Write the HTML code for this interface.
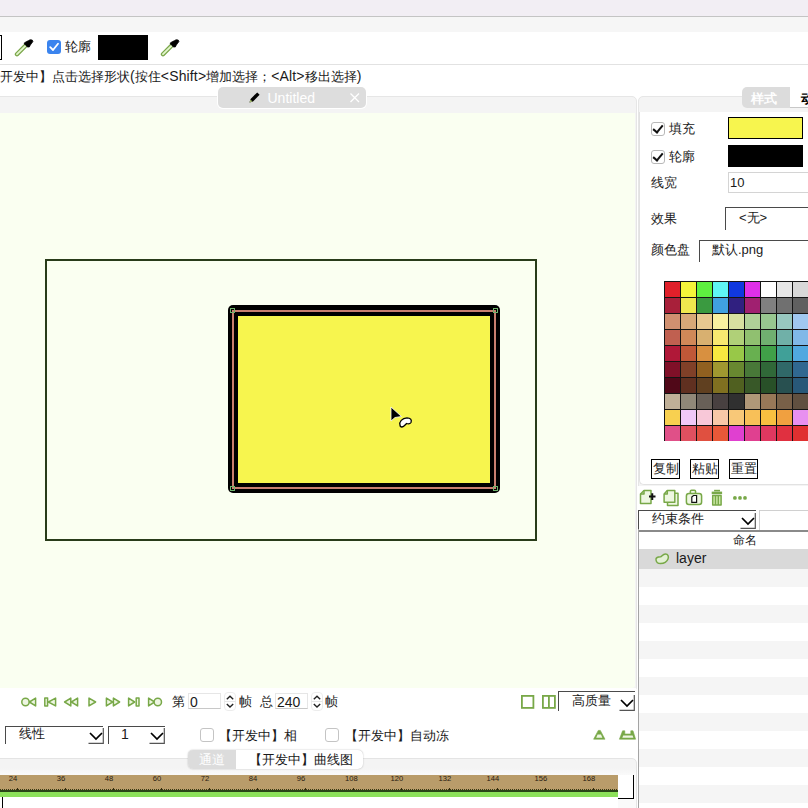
<!DOCTYPE html>
<html><head><meta charset="utf-8">
<style>
*{margin:0;padding:0;box-sizing:border-box}
html,body{width:808px;height:808px;overflow:hidden;background:#fff;font-family:"Liberation Sans",sans-serif;font-size:13px;color:#1a1a1a}
.a{position:absolute}
#topbar{left:0;top:0;width:808px;height:17px;background:#f2eef4;border-bottom:1px solid #c4c4c4}
#band1{left:0;top:17px;width:808px;height:15px;background:#f6f6f6}
#toolbar{left:0;top:32px;width:808px;height:33px;background:#fff;border-bottom:1px solid #e2e2e2}
#status{left:0;top:65px;width:808px;height:31px;background:#fff}
.panel{background:#f4f4f4;border:1px solid #e6e6e6;border-radius:5px 5px 0 0}
.txt{white-space:nowrap;line-height:1}
.chk{width:14px;height:14px;border:1px solid #b8b8b8;border-radius:3px;background:#fff}
.chk::after{content:"";position:absolute;left:3px;top:0px;width:4px;height:8px;border-right:2px solid #111;border-bottom:2px solid #111;transform:rotate(40deg)}
.sunk{background:#fff;border-top:1.6px solid #4a4a4a;border-left:1.6px solid #4a4a4a}
.pal{width:161px;height:160px;background:#141414}
.pal div{position:absolute;width:15px;height:15px}
.btn{height:20px;border:1px solid #000;background:#fff;font-size:13px;line-height:18px;text-align:center;white-space:nowrap}
.rl{font-size:7.6px;color:#2a2010;line-height:7px}
.L{font-size:14px}
.c{display:inline-block;width:1em;text-align:center;font-style:normal}
</style></head><body>
<div class="a" id="topbar"></div>
<div class="a" id="band1"></div>
<div class="a" id="toolbar">
  <div class="a" style="left:-4px;top:3px;width:6px;height:25px;border:1.5px solid #000;background:#fff"></div>
  <svg class="a" style="left:14px;top:6px" width="22" height="20" viewBox="0 0 22 20">
    <path d="M3 16.2 L11.4 7.8" stroke="#7aa64a" stroke-width="4.4" stroke-linecap="round"/>
    <path d="M3 16.2 L11.4 7.8" stroke="#e2f5cc" stroke-width="1.9" stroke-linecap="round"/>
    <path d="M10.3 4.9 L12.5 3.6 L14.7 2.6 L16 1.8 L18.2 2 L18.9 3.5 L17.8 5.1 L16.3 7 L15.3 9 L13.5 8.9 L11.9 7.5 L10.4 6 Z" fill="#000" stroke="#000" stroke-width="0.8" stroke-linejoin="round"/>
  </svg>
  <div class="a" style="left:47px;top:8px;width:14px;height:14px;border-radius:3px;background:#3b84ee"></div>
  <svg class="a" style="left:47px;top:8px" width="14" height="14" viewBox="0 0 14 14"><path d="M3.2 7.2 L6 10 L11 3.8" stroke="#fff" stroke-width="1.8" fill="none" stroke-linecap="round" stroke-linejoin="round"/></svg>
  <div class="a txt" style="left:65px;top:8px;font-size:13px"><i class="c">轮</i><i class="c">廓</i></div>
  <div class="a" style="left:98px;top:3px;width:50px;height:25px;background:#000"></div>
  <svg class="a" style="left:160px;top:6px" width="22" height="20" viewBox="0 0 22 20">
    <path d="M3 16.2 L11.4 7.8" stroke="#7aa64a" stroke-width="4.4" stroke-linecap="round"/>
    <path d="M3 16.2 L11.4 7.8" stroke="#e2f5cc" stroke-width="1.9" stroke-linecap="round"/>
    <path d="M10.3 4.9 L12.5 3.6 L14.7 2.6 L16 1.8 L18.2 2 L18.9 3.5 L17.8 5.1 L16.3 7 L15.3 9 L13.5 8.9 L11.9 7.5 L10.4 6 Z" fill="#000" stroke="#000" stroke-width="0.8" stroke-linejoin="round"/>
  </svg>
</div>
<div class="a" id="status">
  <div class="a txt" id="st" style="left:0;top:4px;font-size:13px;letter-spacing:0.15px"><i class="c">开</i><i class="c">发</i><i class="c">中</i><i class="c">】</i><i class="c">点</i><i class="c">击</i><i class="c">选</i><i class="c">择</i><i class="c">形</i><i class="c">状</i><span class="L">(</span><i class="c">按</i><i class="c">住</i><span class="L">&lt;Shift&gt;</span><i class="c">增</i><i class="c">加</i><i class="c">选</i><i class="c">择</i><i class="c">；</i><span class="L">&lt;Alt&gt;</span><i class="c">移</i><i class="c">出</i><i class="c">选</i><i class="c">择</i><span class="L">)</span></div>
</div>

<!-- left canvas panel -->
<div class="a panel" style="left:-6px;top:96px;width:643px;height:596px;border-radius:5px"></div>
<div class="a" style="left:0;top:113px;width:635px;height:575px;background:#fafff1;border-radius:0 0 3px 0"></div>
<!-- untitled tab -->
<div class="a" style="left:218px;top:87px;width:148px;height:21px;background:#dddddd;border-radius:5px;box-shadow:0 0 0 1px #fff"></div>
<svg class="a" style="left:248px;top:91px" width="13" height="13" viewBox="0 0 13 13"><path d="M1.5 11.5 L2.6 8 L9.2 1.4 L11.6 3.8 L5 10.4 Z" fill="#000"/><path d="M1.5 11.5 L2.5 8.6 L4.4 10.5 Z" fill="#a8c070"/></svg>
<div class="a txt" style="left:267.5px;top:91px;color:#fff;font-size:14px">Untitled</div>
<svg class="a" style="left:349px;top:92px" width="12" height="12" viewBox="0 0 12 12"><path d="M1.5 1.5 L10 10 M10 1.5 L1.5 10" stroke="#fff" stroke-width="1.3"/></svg>

<!-- big outline rect -->
<div class="a" style="left:45px;top:259px;width:492px;height:282px;border:2px solid #283c1a"></div>
<!-- yellow shape -->
<div class="a" style="left:228px;top:305px;width:272px;height:188px;background:#000;border-radius:5px"></div>
<div class="a" style="left:238px;top:316px;width:252px;height:167px;background:#f7f54e"></div>
<div class="a" style="left:232px;top:310px;width:264px;height:179px;border:2px solid #c97e6e"></div>
<div class="a" style="left:229.5px;top:308px;width:5px;height:5px;border:1px solid #6fb36c"></div>
<div class="a" style="left:493px;top:308px;width:5px;height:5px;border:1px solid #6fb36c"></div>
<div class="a" style="left:229.5px;top:486px;width:5px;height:5px;border:1px solid #6fb36c"></div>
<div class="a" style="left:493px;top:486px;width:5px;height:5px;border:1px solid #6fb36c"></div>
<!-- cursor -->
<svg class="a" style="left:388px;top:404px" width="28" height="28" viewBox="0 0 28 28">
  <path d="M3 3 L3 17 L7 13.5 L13.5 12.5 Z" fill="#000" stroke="#fff" stroke-width="0.8"/>
  <path d="M12 21 C11 18 14 14 19 13.8 C22.5 13.8 24 16 23 18.5 C22 20 20 20 18.5 19.5 C17 21 15.5 23 14 23 C12.5 23 12 22 12 21 Z" fill="#fff" stroke="#000" stroke-width="1.3"/>
</svg>


<!-- bottom left controls -->
<div class="a" style="left:0;top:688px;width:636px;height:70px;background:#fff"></div>
<svg class="a" style="left:18px;top:694px" width="150" height="16" viewBox="0 0 150 16">
 <g fill="#eef6e2" stroke="#78a848" stroke-width="1.5" stroke-linejoin="round">
  <circle cx="7.5" cy="8" r="3.7"/>
  <path d="M17.6 4.1 L17.6 11.9 L11.4 8 Z"/>
  <rect x="26.8" y="4.1" width="2.8" height="7.8"/>
  <path d="M37.6 4.1 L37.6 11.9 L30.4 8 Z"/>
  <path d="M52.8 4.1 L52.8 11.9 L46.6 8 Z"/>
  <path d="M59.6 4.1 L59.6 11.9 L53.4 8 Z"/>
  <path d="M71 4.1 L71 11.9 L77.6 8 Z"/>
  <path d="M88.4 4.1 L88.4 11.9 L94.6 8 Z"/>
  <path d="M95.4 4.1 L95.4 11.9 L101.6 8 Z"/>
  <path d="M110.6 4.1 L110.6 11.9 L116.6 8 Z"/>
  <rect x="118.2" y="4.1" width="2.8" height="7.8"/>
  <path d="M130.6 4.1 L130.6 11.9 L136.6 8 Z"/>
  <circle cx="139.8" cy="8" r="3.7"/>
 </g>
</svg>
<div class="a txt" style="left:172px;top:695px;font-size:13px"><i class="c">第</i></div>
<div class="a" style="left:188px;top:693px;width:33px;height:16px;border:1px solid #e6e6e6;border-bottom-color:#c8c8c8"></div>
<div class="a txt" style="left:190px;top:695px;font-size:14px">0</div>
<svg class="a" style="left:224px;top:692px" width="12" height="19" viewBox="0 0 12 19"><rect x="0.5" y="0.5" width="11" height="18" rx="3.5" fill="#fff" stroke="#ececec"/><path d="M0.5 9.5 L11.5 9.5" stroke="#e6e6e6" stroke-width="1"/><path d="M2.8 7.2 L6 4.2 L9.2 7.2 M2.8 12 L6 15 L9.2 12" fill="none" stroke="#222" stroke-width="1.4"/></svg>
<div class="a txt" style="left:239px;top:695px;font-size:13px"><i class="c">帧</i></div>
<div class="a txt" style="left:260px;top:695px;font-size:13px"><i class="c">总</i></div>
<div class="a" style="left:275px;top:693px;width:33px;height:16px;border:1px solid #e6e6e6;border-bottom-color:#c8c8c8"></div>
<div class="a txt" style="left:277px;top:695px;font-size:14px">240</div>
<svg class="a" style="left:311px;top:692px" width="12" height="19" viewBox="0 0 12 19"><rect x="0.5" y="0.5" width="11" height="18" rx="3.5" fill="#fff" stroke="#ececec"/><path d="M0.5 9.5 L11.5 9.5" stroke="#e6e6e6" stroke-width="1"/><path d="M2.8 7.2 L6 4.2 L9.2 7.2 M2.8 12 L6 15 L9.2 12" fill="none" stroke="#222" stroke-width="1.4"/></svg>
<div class="a txt" style="left:325px;top:695px;font-size:13px"><i class="c">帧</i></div>
<svg class="a" style="left:520px;top:694px" width="38" height="16" viewBox="0 0 38 16"><g fill="none" stroke="#78a848" stroke-width="1.8"><rect x="1.9" y="1.9" width="11.5" height="12"/><rect x="22.9" y="1.9" width="12" height="12"/><path d="M28.9 1.9 L28.9 13.9"/></g></svg>
<div class="a sunk" style="left:558px;top:691px;width:77px;height:20px"></div>
<div class="a txt" style="left:572px;top:694px;font-size:13px"><i class="c">高</i><i class="c">质</i><i class="c">量</i></div>
<svg class="a" style="left:617px;top:695px" width="18" height="16" viewBox="0 0 18 16"><path d="M4 5 L10 11 L16 5" fill="none" stroke="#000" stroke-width="1.7"/><path d="M2.5 15.3 L17.3 15.3 L17.3 -4" fill="none" stroke="#555" stroke-width="1.2"/></svg>

<div class="a sunk" style="left:5px;top:726px;width:98px;height:18px"></div>
<div class="a txt" style="left:19px;top:727px;font-size:13px"><i class="c">线</i><i class="c">性</i></div>
<svg class="a" style="left:85.5px;top:728px" width="18" height="16" viewBox="0 0 18 16"><path d="M4 5 L10 11 L16 5" fill="none" stroke="#000" stroke-width="1.7"/><path d="M2.5 15.3 L17.3 15.3 L17.3 -4" fill="none" stroke="#555" stroke-width="1.2"/></svg>
<div class="a sunk" style="left:108px;top:726px;width:57px;height:18px"></div>
<div class="a txt" style="left:121px;top:727px;font-size:14px">1</div>
<svg class="a" style="left:147.3px;top:728px" width="18" height="16" viewBox="0 0 18 16"><path d="M4 5 L10 11 L16 5" fill="none" stroke="#000" stroke-width="1.7"/><path d="M2.5 15.3 L17.3 15.3 L17.3 -4" fill="none" stroke="#555" stroke-width="1.2"/></svg>
<div class="a" style="left:200px;top:728px;width:14px;height:14px;border:1px solid #c4c4c4;border-radius:3px;background:#fff"></div>
<div class="a txt" style="left:219px;top:729px;font-size:13px"><i class="c">【</i><i class="c">开</i><i class="c">发</i><i class="c">中</i><i class="c">】</i><i class="c">相</i></div>
<div class="a" style="left:325px;top:728px;width:14px;height:14px;border:1px solid #c4c4c4;border-radius:3px;background:#fff"></div>
<div class="a txt" style="left:345px;top:729px;font-size:13px;width:104px;overflow:hidden"><i class="c">【</i><i class="c">开</i><i class="c">发</i><i class="c">中</i><i class="c">】</i><i class="c">自</i><i class="c">动</i><i class="c">冻</i></div>
<svg class="a" style="left:590px;top:728px" width="48" height="14" viewBox="0 0 48 14">
 <path d="M3.6 11.2 L8.3 2.4 L10.3 2.4 L15 11.2 Z" fill="#78a848" stroke="#78a848" stroke-width="0.6" stroke-linejoin="round"/>
 <path d="M6.2 9.8 L7.6 6.4 L11 6.4 L12.4 9.8 Z" fill="#eef6e2"/>
 <path d="M29.4 11.2 L32.6 2.8 L34.8 2.8 L34.8 6 L40.8 6 L40.8 2.8 L43 2.8 L45.6 11.2 Z" fill="#78a848" stroke="#78a848" stroke-width="0.6" stroke-linejoin="round"/>
 <path d="M32.3 9.8 L33.2 7.5 L42.6 7.5 L43.4 9.8 Z" fill="#eef6e2"/>
</svg>

<!-- bottom panel -->
<div class="a" style="left:-6px;top:758px;width:643px;height:60px;background:linear-gradient(#f4f4f4 0 9px,#fafafa 16px);border:1px solid #e4e4e4;border-radius:5px"></div>
<div class="a" style="left:188px;top:750px;width:175px;height:19px;background:#fff;border-radius:5px;box-shadow:0 0 1.5px #aaa"></div>
<div class="a" style="left:188px;top:750px;width:48px;height:19px;background:#dcdcdc;border-radius:5px 0 0 5px"></div>
<div class="a txt" style="left:199px;top:753px;font-size:13px;color:#fff"><i class="c">通</i><i class="c">道</i></div>
<div class="a txt" style="left:249px;top:753px;font-size:13px"><i class="c">【</i><i class="c">开</i><i class="c">发</i><i class="c">中</i><i class="c">】</i><i class="c">曲</i><i class="c">线</i><i class="c">图</i></div>
<div class="a" style="left:0;top:775px;width:618px;height:15px;background:#b99c6a"></div>
<div class="a txt rl" style="left:-2.1px;top:775px;width:30px;text-align:center">24</div>
<div class="a txt rl" style="left:45.9px;top:775px;width:30px;text-align:center">36</div>
<div class="a txt rl" style="left:93.9px;top:775px;width:30px;text-align:center">48</div>
<div class="a txt rl" style="left:141.9px;top:775px;width:30px;text-align:center">60</div>
<div class="a txt rl" style="left:189.9px;top:775px;width:30px;text-align:center">72</div>
<div class="a txt rl" style="left:237.9px;top:775px;width:30px;text-align:center">84</div>
<div class="a txt rl" style="left:285.9px;top:775px;width:30px;text-align:center">96</div>
<div class="a txt rl" style="left:336.4px;top:775px;width:30px;text-align:center">108</div>
<div class="a txt rl" style="left:381.9px;top:775px;width:30px;text-align:center">120</div>
<div class="a txt rl" style="left:429.9px;top:775px;width:30px;text-align:center">132</div>
<div class="a txt rl" style="left:477.9px;top:775px;width:30px;text-align:center">144</div>
<div class="a txt rl" style="left:525.9px;top:775px;width:30px;text-align:center">156</div>
<div class="a txt rl" style="left:573.9px;top:775px;width:30px;text-align:center">168</div>
<div class="a" style="left:0;top:789px;width:618px;height:1px;background:repeating-linear-gradient(90deg,#3a3a14 0 1px,#b99c6a 1px 2px)"></div>
<div class="a" style="left:17px;top:787.8px;width:1px;height:3px;background:#3a2e10"></div><div class="a" style="left:65px;top:787.8px;width:1px;height:3px;background:#3a2e10"></div><div class="a" style="left:113px;top:787.8px;width:1px;height:3px;background:#3a2e10"></div><div class="a" style="left:161px;top:787.8px;width:1px;height:3px;background:#3a2e10"></div><div class="a" style="left:209px;top:787.8px;width:1px;height:3px;background:#3a2e10"></div><div class="a" style="left:257px;top:787.8px;width:1px;height:3px;background:#3a2e10"></div><div class="a" style="left:305px;top:787.8px;width:1px;height:3px;background:#3a2e10"></div><div class="a" style="left:353px;top:787.8px;width:1px;height:3px;background:#3a2e10"></div><div class="a" style="left:401px;top:787.8px;width:1px;height:3px;background:#3a2e10"></div><div class="a" style="left:449px;top:787.8px;width:1px;height:3px;background:#3a2e10"></div><div class="a" style="left:497px;top:787.8px;width:1px;height:3px;background:#3a2e10"></div><div class="a" style="left:545px;top:787.8px;width:1px;height:3px;background:#3a2e10"></div><div class="a" style="left:593px;top:787.8px;width:1px;height:3px;background:#3a2e10"></div>
<div class="a" style="left:0;top:790px;width:618px;height:1.6px;background:#2a4418"></div>
<div class="a" style="left:0;top:791.6px;width:618px;height:5px;background:#8ce05a"></div>
<div class="a" style="left:618px;top:775px;width:16px;height:24px;background:#fff;border-right:1.5px solid #000;border-bottom:1.5px solid #000"></div>
<div class="a" style="left:0;top:797px;width:618px;height:11px;background:#fff"></div>
<div class="a" style="left:1.5px;top:797px;width:1.5px;height:11px;background:#000"></div>

<!-- right panel -->
<div class="a panel" style="left:638px;top:96px;width:180px;height:712px"></div>
<div class="a" style="left:638.5px;top:112px;width:170px;height:373px;background:#fff;border-left:1px solid #e2e2e2;border-bottom:1.5px solid #e2e2e2;border-radius:0 0 0 5px"></div>

<!-- right panel content -->
<div class="a" style="left:741.5px;top:87.3px;width:49px;height:20.3px;background:#dcdcdc;border-radius:5px 0 0 5px"></div>
<div class="a txt" style="left:751px;top:92px;color:#fff;font-size:13px;font-weight:bold"><i class="c">样</i><i class="c">式</i></div>
<div class="a" style="left:790px;top:87.3px;width:30px;height:20.3px;background:#fff;border-bottom:1px solid #c8c8c8"></div>
<div class="a txt" style="left:801px;top:92px;color:#000;font-size:13px;font-weight:bold"><i class="c">动</i></div>
<div class="chk a" style="left:651px;top:122px"></div>
<div class="a txt" style="left:669px;top:122px"><i class="c">填</i><i class="c">充</i></div>
<div class="a" style="left:728px;top:117px;width:75px;height:22px;background:#f7f54e;border:1px solid #000"></div>
<div class="chk a" style="left:651px;top:150px"></div>
<div class="a txt" style="left:669px;top:150px"><i class="c">轮</i><i class="c">廓</i></div>
<div class="a" style="left:728px;top:145px;width:75px;height:22px;background:#000"></div>
<div class="a txt" style="left:651px;top:176px"><i class="c">线</i><i class="c">宽</i></div>
<div class="a" style="left:728px;top:172px;width:90px;height:21px;background:#fff;border:1px solid #d4d4d4"></div>
<div class="a txt" style="left:730px;top:176px">10</div>
<div class="a txt" style="left:651px;top:212px"><i class="c">效</i><i class="c">果</i></div>
<div class="a sunk" style="left:725px;top:207px;width:90px;height:23px"></div>
<div class="a txt" style="left:739px;top:211px">&lt;<i class="c">无</i>&gt;</div>
<div class="a txt" style="left:651px;top:243px"><i class="c">颜</i><i class="c">色</i><i class="c">盘</i></div>
<div class="a sunk" style="left:698.5px;top:239.5px;width:120px;height:22.5px"></div>
<div class="a txt" style="left:712px;top:243px"><i class="c">默</i><i class="c">认</i>.png</div>
<div class="a pal" style="left:664px;top:281px">
<div style="left:1px;top:1px;background:#e0202a"></div>
<div style="left:17px;top:1px;background:#f5f53a"></div>
<div style="left:33px;top:1px;background:#5ef040"></div>
<div style="left:49px;top:1px;background:#5ff5f5"></div>
<div style="left:65px;top:1px;background:#1038e0"></div>
<div style="left:81px;top:1px;background:#e030e8"></div>
<div style="left:97px;top:1px;background:#ffffff"></div>
<div style="left:113px;top:1px;background:#e6e6e6"></div>
<div style="left:129px;top:1px;background:#d8d8d8"></div>
<div style="left:1px;top:17px;background:#a8203a"></div>
<div style="left:17px;top:17px;background:#efe84e"></div>
<div style="left:33px;top:17px;background:#3a9a40"></div>
<div style="left:49px;top:17px;background:#40a0e0"></div>
<div style="left:65px;top:17px;background:#302080"></div>
<div style="left:81px;top:17px;background:#a02070"></div>
<div style="left:97px;top:17px;background:#808080"></div>
<div style="left:113px;top:17px;background:#707070"></div>
<div style="left:129px;top:17px;background:#606060"></div>
<div style="left:1px;top:33px;background:#d09070"></div>
<div style="left:17px;top:33px;background:#d8a878"></div>
<div style="left:33px;top:33px;background:#e8c890"></div>
<div style="left:49px;top:33px;background:#f8f0a0"></div>
<div style="left:65px;top:33px;background:#d8e0a0"></div>
<div style="left:81px;top:33px;background:#b0d098"></div>
<div style="left:97px;top:33px;background:#98c890"></div>
<div style="left:113px;top:33px;background:#98c8c0"></div>
<div style="left:129px;top:33px;background:#a0c8f0"></div>
<div style="left:1px;top:49px;background:#c06050"></div>
<div style="left:17px;top:49px;background:#d08858"></div>
<div style="left:33px;top:49px;background:#d8b070"></div>
<div style="left:49px;top:49px;background:#f8e870"></div>
<div style="left:65px;top:49px;background:#b0d078"></div>
<div style="left:81px;top:49px;background:#90c070"></div>
<div style="left:97px;top:49px;background:#70b070"></div>
<div style="left:113px;top:49px;background:#70b0a8"></div>
<div style="left:129px;top:49px;background:#80b8e8"></div>
<div style="left:1px;top:65px;background:#b01838"></div>
<div style="left:17px;top:65px;background:#c05838"></div>
<div style="left:33px;top:65px;background:#d89040"></div>
<div style="left:49px;top:65px;background:#f8e840"></div>
<div style="left:65px;top:65px;background:#98c848"></div>
<div style="left:81px;top:65px;background:#68b050"></div>
<div style="left:97px;top:65px;background:#40a048"></div>
<div style="left:113px;top:65px;background:#40a098"></div>
<div style="left:129px;top:65px;background:#50a8e0"></div>
<div style="left:1px;top:81px;background:#801028"></div>
<div style="left:17px;top:81px;background:#804028"></div>
<div style="left:33px;top:81px;background:#906020"></div>
<div style="left:49px;top:81px;background:#a09830"></div>
<div style="left:65px;top:81px;background:#688830"></div>
<div style="left:81px;top:81px;background:#487838"></div>
<div style="left:97px;top:81px;background:#306838"></div>
<div style="left:113px;top:81px;background:#306868"></div>
<div style="left:129px;top:81px;background:#306890"></div>
<div style="left:1px;top:97px;background:#500818"></div>
<div style="left:17px;top:97px;background:#603020"></div>
<div style="left:33px;top:97px;background:#604020"></div>
<div style="left:49px;top:97px;background:#807020"></div>
<div style="left:65px;top:97px;background:#506020"></div>
<div style="left:81px;top:97px;background:#385828"></div>
<div style="left:97px;top:97px;background:#285028"></div>
<div style="left:113px;top:97px;background:#285050"></div>
<div style="left:129px;top:97px;background:#285878"></div>
<div style="left:1px;top:113px;background:#c0b098"></div>
<div style="left:17px;top:113px;background:#908878"></div>
<div style="left:33px;top:113px;background:#686058"></div>
<div style="left:49px;top:113px;background:#484040"></div>
<div style="left:65px;top:113px;background:#303030"></div>
<div style="left:81px;top:113px;background:#b09878"></div>
<div style="left:97px;top:113px;background:#987858"></div>
<div style="left:113px;top:113px;background:#786048"></div>
<div style="left:129px;top:113px;background:#605040"></div>
<div style="left:1px;top:129px;background:#f8d050"></div>
<div style="left:17px;top:129px;background:#f0c8f8"></div>
<div style="left:33px;top:129px;background:#f8c8d8"></div>
<div style="left:49px;top:129px;background:#f8c8a8"></div>
<div style="left:65px;top:129px;background:#f8c878"></div>
<div style="left:81px;top:129px;background:#f8c058"></div>
<div style="left:97px;top:129px;background:#f8c040"></div>
<div style="left:113px;top:129px;background:#f0a040"></div>
<div style="left:129px;top:129px;background:#e890f0"></div>
<div style="left:1px;top:145px;background:#e05088"></div>
<div style="left:17px;top:145px;background:#e05060"></div>
<div style="left:33px;top:145px;background:#e05040"></div>
<div style="left:49px;top:145px;background:#e85838"></div>
<div style="left:65px;top:145px;background:#e040d0"></div>
<div style="left:81px;top:145px;background:#e04090"></div>
<div style="left:97px;top:145px;background:#e03860"></div>
<div style="left:113px;top:145px;background:#e03040"></div>
<div style="left:129px;top:145px;background:#e03030"></div>
</div>
<div class="a btn" style="left:651px;top:459px;width:29px"><i class="c">复</i><i class="c">制</i></div>
<div class="a btn" style="left:690px;top:459px;width:29px"><i class="c">粘</i><i class="c">贴</i></div>
<div class="a btn" style="left:729px;top:459px;width:29px"><i class="c">重</i><i class="c">置</i></div>

<!-- right lower -->
<div class="a" style="left:638px;top:486px;width:170px;height:322px;background:#fff"></div>
<svg class="a" style="left:638px;top:486px" width="112" height="22" viewBox="0 0 112 22">
  <g fill="#eef7e2" stroke="#78a848" stroke-width="1.5" stroke-linejoin="round">
    <path d="M2.5 8 L6 4.5 L13 4.5 L13 17.6 L2.5 17.6 Z"/>
    <path d="M2.5 8 L6 8 L6 4.5" fill="none"/>
    <rect x="29.5" y="7.2" width="10.5" height="12.3"/>
    <path d="M26.1 8 L29.3 4.5 L36.8 4.5 L36.8 16.3 L26.1 16.3 Z"/>
    <path d="M26.1 8 L29.3 8 L29.3 4.5" fill="none"/>
    <rect x="52.3" y="4.3" width="5.3" height="3.4" rx="1.2"/>
    <rect x="48.4" y="7.4" width="15.2" height="11" rx="2.5"/>
    <rect x="76.1" y="3.8" width="5.9" height="1.6" fill="#78a848" stroke="none"/>
    <rect x="73.7" y="5.6" width="10.4" height="2.6" fill="#78a848" stroke="none"/>
    <rect x="74.7" y="9.6" width="8.4" height="9.3" fill="#d4efb0"/>
    <path d="M77.5 9.6 L77.5 18.9 M80.3 9.6 L80.3 18.9"/>
  </g>
  <path d="M11 10.6 L17.5 10.6 M14.25 7.3 L14.25 14" stroke="#111" stroke-width="2"/>
  <path d="M53.8 11 L55.5 9.5 L58.6 9.5 L58.6 16.3 L53.8 16.3 Z" fill="#fff" stroke="#111" stroke-width="1.2"/>
  <circle cx="96.9" cy="11.9" r="1.9" fill="#78a848"/><circle cx="102" cy="11.9" r="1.9" fill="#78a848"/><circle cx="107" cy="11.9" r="1.9" fill="#78a848"/>
</svg>
<div class="a" style="left:638px;top:530px;width:170px;height:1.5px;background:#8a8a8a"></div>
<div class="a sunk" style="left:638px;top:510px;width:118px;height:20px"></div>
<div class="a txt" style="left:652px;top:512px;font-size:13px"><i class="c">约</i><i class="c">束</i><i class="c">条</i><i class="c">件</i></div>
<svg class="a" style="left:737.5px;top:512.5px" width="18" height="16" viewBox="0 0 18 16"><path d="M4 5 L10 11 L16 5" fill="none" stroke="#000" stroke-width="1.7"/><path d="M2.5 15.3 L17.3 15.3 L17.3 -4" fill="none" stroke="#555" stroke-width="1.2"/></svg>
<div class="a" style="left:759px;top:510px;width:60px;height:20px;background:#fff;border-top:1px solid #d0d0d0;border-left:1px solid #d0d0d0"></div>
<div class="a" style="left:638px;top:529px;width:1px;height:279px;background:#a4a4a4"></div>
<div class="a txt" style="left:733px;top:534px;font-size:12px"><i class="c">命</i><i class="c">名</i></div>
<div class="a" style="left:639px;top:549px;width:169px;height:20px;background:#d9d9d9"></div>
<svg class="a" style="left:654px;top:552px" width="16" height="14" viewBox="0 0 16 14"><path d="M2 8 C1.5 5.5 4 5 6.5 4.8 C8 4.6 8.5 2 11.5 2 C14 2 15 4.5 14 7 C13 9.5 10 11.6 6.5 11.6 C4 11.6 2.3 10 2 8 Z" fill="#e2f0d4" stroke="#78a848" stroke-width="1.5"/></svg>
<div class="a txt" style="left:676px;top:551px;font-size:14px">layer</div>
<div class="a" style="left:639px;top:569px;width:169px;height:18px;background:#f5f5f5"></div>
<div class="a" style="left:639px;top:605px;width:169px;height:18px;background:#f5f5f5"></div>
<div class="a" style="left:639px;top:641px;width:169px;height:18px;background:#f5f5f5"></div>
<div class="a" style="left:639px;top:677px;width:169px;height:18px;background:#f5f5f5"></div>
<div class="a" style="left:639px;top:713px;width:169px;height:18px;background:#f5f5f5"></div>
<div class="a" style="left:639px;top:749px;width:169px;height:18px;background:#f5f5f5"></div>
<div class="a" style="left:639px;top:785px;width:169px;height:18px;background:#f5f5f5"></div>

</body></html>
